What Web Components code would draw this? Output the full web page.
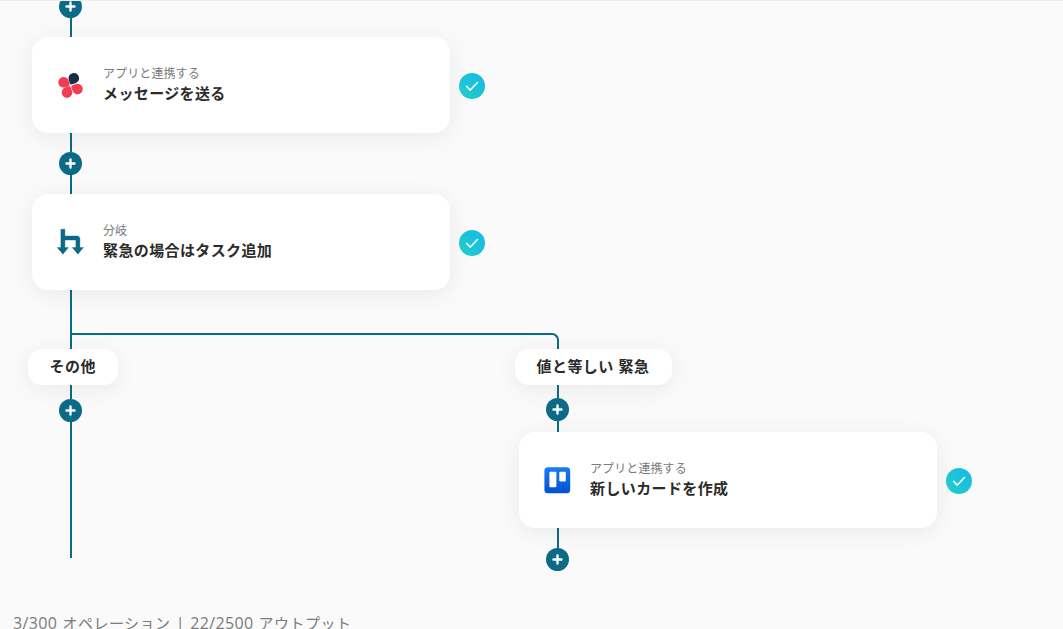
<!DOCTYPE html>
<html lang="ja">
<head>
<meta charset="utf-8">
<title>Flow</title>
<style>
    html, body { margin: 0; padding: 0; }
    body { font-family: "Noto Sans CJK JP", "Noto Sans", sans-serif; }
</style>
</head>
<body>
<flow-page>
    <flow-plus style="margin-top:-6px"></flow-plus>
    <flow-link height="19"></flow-link>
    <flow-step>
        <svg slot="icon" width="32" height="32" viewBox="0 0 32 32">
            <path fill="#162d45" transform="translate(13.5 4) rotate(73 5.3 5.3)" d="M5.3 0A5.3 5.3 0 0 1 10.6 5.3V8.6A2 2 0 0 1 8.6 10.6H5.3A5.3 5.3 0 0 1 5.3 0Z"/>
            <path fill="#f03d54" transform="translate(3.3 8) rotate(-18 5.3 5.3)" d="M5.3 0A5.3 5.3 0 0 1 10.6 5.3V8.6A2 2 0 0 1 8.6 10.6H5.3A5.3 5.3 0 0 1 5.3 0Z"/>
            <path fill="#f03d54" transform="translate(17.2 14.7) rotate(160 5.3 5.3)" d="M5.3 0A5.3 5.3 0 0 1 10.6 5.3V8.6A2 2 0 0 1 8.6 10.6H5.3A5.3 5.3 0 0 1 5.3 0Z"/>
            <path fill="#f03d54" transform="translate(6.7 18.2) rotate(-112 5.3 5.3)" d="M5.3 0A5.3 5.3 0 0 1 10.6 5.3V8.6A2 2 0 0 1 8.6 10.6H5.3A5.3 5.3 0 0 1 5.3 0Z"/>
        </svg>
        <span slot="kind">アプリと連携する</span>
        <span slot="title">メッセージを送る</span>
    </flow-step>
    <flow-link height="19"></flow-link>
    <flow-plus></flow-plus>
    <flow-link height="19"></flow-link>
    <flow-step>
        <svg slot="icon" width="32" height="32" viewBox="0 0 32 32" fill="#0b6a85">
            <path stroke="#0b6a85" stroke-width=".4" stroke-linejoin="round" d="M5.9 3.2H9.9V10H22C23.8 10 24.9 11.1 24.9 12.9V21.6H28.4L22.9 28.2 17.3 21.6H20.9V14H9.9V21.6H13.4L7.9 28.2 2.3 21.6H5.9Z"/>
        </svg>
        <span slot="kind">分岐</span>
        <span slot="title">緊急の場合はタスク追加</span>
    </flow-step>
    <flow-link height="43"></flow-link>
    <flow-branch>
        <flow-lane slot="a">
            <flow-label style="margin-left:28px">その他</flow-label>
            <flow-link height="14"></flow-link>
            <flow-plus></flow-plus>
            <flow-link height="136"></flow-link>
        </flow-lane>
        <flow-lane slot="b">
            <flow-label>値と等しい 緊急</flow-label>
            <flow-link height="13" style="margin-left:42px"></flow-link>
            <flow-plus style="margin-left:31px"></flow-plus>
            <flow-link height="11" style="margin-left:42px"></flow-link>
            <flow-step style="margin-left:4px">
                <svg slot="icon" width="32" height="32" viewBox="0 0 32 32">
                    <defs>
                        <linearGradient id="trelloFill" x1="0" y1="0" x2="0" y2="1">
                            <stop offset="0" stop-color="#1a7bf5"/>
                            <stop offset="1" stop-color="#0052cc"/>
                        </linearGradient>
                    </defs>
                    <rect x="2.4" y="3.3" width="25.8" height="26" rx="3.5" fill="url(#trelloFill)"/>
                    <rect x="7.4" y="7.8" width="7" height="15.4" rx="1" fill="#fff"/>
                    <rect x="17.3" y="7.8" width="6.5" height="9.8" rx="1" fill="#fff"/>
                </svg>
                <span slot="kind">アプリと連携する</span>
                <span slot="title">新しいカードを作成</span>
            </flow-step>
            <flow-link height="20" style="margin-left:42px"></flow-link>
            <flow-plus style="margin-left:31px"></flow-plus>
        </flow-lane>
    </flow-branch>
    <flow-usage>3/300 <span>オペレーション</span> | 22/2500 <span>アウトプット</span></flow-usage>
</flow-page>

<script>
const TEAL = '#0b6a85';

class FlowPage extends HTMLElement {
    constructor() {
        super();
        this.attachShadow({ mode: 'open' });
        this.shadowRoot.innerHTML = `
            <style>
                :host {
                    display: block;
                    height: 629px;
                    overflow: hidden;
                    background: #fafafa;
                    color: #2b2b2b;
                }
                .edge {
                    height: 1px;
                    margin-bottom: -1px;
                    background: #ededed;
                    position: relative;
                    z-index: 1;
                }
            </style>
            <div class="edge"></div>
            <slot></slot>
        `;
    }
}

class FlowLink extends HTMLElement {
    constructor() {
        super();
        this.attachShadow({ mode: 'open' });
        const h = this.getAttribute('height') || 19;
        this.shadowRoot.innerHTML = `
            <style>
                :host {
                    display: block;
                    width: 2px;
                    height: ${h}px;
                    margin-left: 70px;
                    background: ${TEAL};
                }
            </style>
        `;
    }
}

class FlowPlus extends HTMLElement {
    constructor() {
        super();
        this.attachShadow({ mode: 'open' });
        this.shadowRoot.innerHTML = `
            <style>
                :host {
                    display: block;
                    width: 23px;
                    height: 23px;
                    margin-left: 59px;
                    border-radius: 50%;
                    background: ${TEAL};
                }
                svg { display: block; }
            </style>
            <svg width="23" height="23" viewBox="0 0 23 23">
                <path d="M11.5 7.5v8M7.5 11.5h8" stroke="#fff" stroke-width="2.4" stroke-linecap="round"/>
            </svg>
        `;
    }
}

class FlowCheck extends HTMLElement {
    constructor() {
        super();
        this.attachShadow({ mode: 'open' });
        this.shadowRoot.innerHTML = `
            <style>
                :host {
                    display: block;
                    flex: none;
                    width: 26px;
                    height: 26px;
                    margin-top: 36px;
                    border-radius: 50%;
                    background: linear-gradient(45deg, #22cfc4, #16b8ea);
                }
                svg { display: block; }
            </style>
            <svg width="26" height="26" viewBox="0 0 26 26">
                <path d="M7.6 13.4l3.7 3.7 7.2-7.6" fill="none" stroke="#fff" stroke-width="1.5" stroke-linecap="round" stroke-linejoin="round"/>
            </svg>
        `;
    }
}

class FlowStep extends HTMLElement {
    constructor() {
        super();
        this.attachShadow({ mode: 'open' });
        this.shadowRoot.innerHTML = `
            <style>
                :host {
                    display: flex;
                    align-items: flex-start;
                    gap: 9px;
                    margin-left: 32px;
                }
                .card {
                    display: flex;
                    align-items: center;
                    gap: 16px;
                    box-sizing: border-box;
                    width: 418px;
                    height: 96px;
                    padding: 0 23px;
                    background: #fff;
                    border-radius: 16px;
                    box-shadow: 0 4px 24px rgba(0, 0, 0, .07);
                }
                .icon { flex: none; width: 32px; height: 32px; }
                .text { display: flex; flex-direction: column; padding-bottom: 2px; }
                .kind {
                    font-size: 12px;
                    line-height: 18px;
                    letter-spacing: .1px;
                    color: #7b7b7b;
                }
                .title {
                    font-size: 15px;
                    font-weight: 700;
                    line-height: 22px;
                    letter-spacing: .38px;
                    color: #2b2b2b;
                }
            </style>
            <div class="card">
                <div class="icon"><slot name="icon"></slot></div>
                <div class="text">
                    <div class="kind"><slot name="kind"></slot></div>
                    <div class="title"><slot name="title"></slot></div>
                </div>
            </div>
            <flow-check></flow-check>
        `;
    }
}

class FlowBranch extends HTMLElement {
    constructor() {
        super();
        this.attachShadow({ mode: 'open' });
        this.shadowRoot.innerHTML = `
            <style>
                :host { display: block; }
                .elbow {
                    box-sizing: border-box;
                    width: 489px;
                    height: 16px;
                    margin-left: 70px;
                    border: 2px solid ${TEAL};
                    border-bottom: 0;
                    border-top-right-radius: 7px;
                }
                .lanes { display: flex; }
                .a { width: 515px; flex: none; }
            </style>
            <div class="elbow"></div>
            <div class="lanes">
                <div class="a"><slot name="a"></slot></div>
                <div class="b"><slot name="b"></slot></div>
            </div>
        `;
    }
}

class FlowLane extends HTMLElement {
    constructor() {
        super();
        this.attachShadow({ mode: 'open' });
        this.shadowRoot.innerHTML = `
            <style>
                :host { display: block; }
            </style>
            <slot></slot>
        `;
    }
}

class FlowLabel extends HTMLElement {
    constructor() {
        super();
        this.attachShadow({ mode: 'open' });
        this.shadowRoot.innerHTML = `
            <style>
                :host {
                    display: block;
                    width: fit-content;
                    box-sizing: border-box;
                    height: 36px;
                    padding: 0 22.5px 0 21.5px;
                    background: #fff;
                    border-radius: 14px;
                    box-shadow: 0 4px 24px rgba(0, 0, 0, .07);
                    font-size: 15px;
                    font-weight: 700;
                    line-height: 34px;
                    letter-spacing: .45px;
                    word-spacing: 1px;
                    color: #2b2b2b;
                    white-space: nowrap;
                }
            </style>
            <slot></slot>
        `;
    }
}

class FlowUsage extends HTMLElement {
    constructor() {
        super();
        this.attachShadow({ mode: 'open' });
        this.shadowRoot.innerHTML = `
            <style>
                :host {
                    display: block;
                    margin: 40px 0 0 13px;
                    font-family: "Open Sans", "Noto Sans CJK JP", sans-serif;
                    font-size: 16px;
                    line-height: 24px;
                    letter-spacing: .35px;
                    word-spacing: .7px;
                    color: #7b7b7b;
                    white-space: nowrap;
                }
                ::slotted(span) {
                    font-family: "Noto Sans CJK JP", sans-serif;
                    font-size: 15px;
                    letter-spacing: .5px;
                }
            </style>
            <slot></slot>
        `;
    }
}

customElements.define('flow-page', FlowPage);
customElements.define('flow-link', FlowLink);
customElements.define('flow-plus', FlowPlus);
customElements.define('flow-check', FlowCheck);
customElements.define('flow-step', FlowStep);
customElements.define('flow-branch', FlowBranch);
customElements.define('flow-lane', FlowLane);
customElements.define('flow-label', FlowLabel);
customElements.define('flow-usage', FlowUsage);
</script>
</body>
</html>
